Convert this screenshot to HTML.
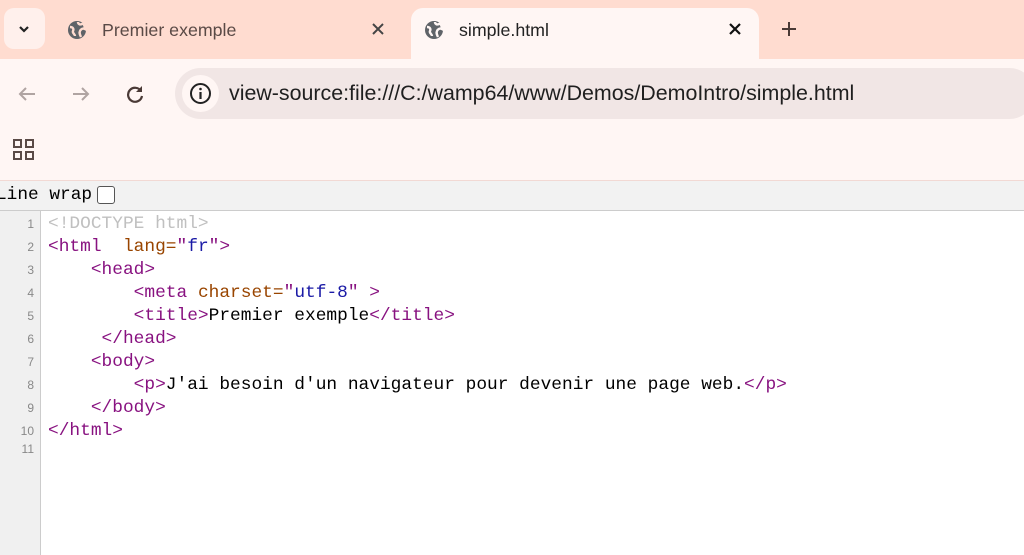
<!DOCTYPE html>
<html><head><style>
body{margin:0;width:1024px;height:555px;overflow:hidden;background:#fff;font-family:"Liberation Sans",sans-serif;position:relative}
.a{position:absolute}
.strip{left:0;top:0;width:1024px;height:60px;background:#ffdcd0}
.tb{left:0;top:59px;width:1024px;height:121px;background:#fff6f4;border-bottom:1px solid #f2d9d4}
.mono{font-family:"Liberation Mono",monospace}
.code{font-size:17.85px;line-height:23px;white-space:pre;left:48px;top:213px;color:#000}
.ln{font-size:12px;color:#888;right:0;width:34px;text-align:right;line-height:23px}
.t{color:#881280}.at{color:#994500}.v{color:#1a1aa6}.c{color:#c0c0c0}
</style></head><body>
<div class="a strip"></div>
<div class="a" style="left:4px;top:8px;width:41px;height:41px;border-radius:10px;background:#fff0ec"></div>
<svg class="a" style="left:16px;top:21px" width="16" height="16"><path d="M4 6l4 4 4-4" stroke="#222" stroke-width="2.2" fill="none"/></svg>
<svg class="a" style="left:67px;top:20px" width="20" height="20" viewBox="0 0 20 20"><circle cx="10" cy="10" r="9" fill="#5f6368"/><path d="M3 7c3 0 4 2 3 4s2 3 2 5M11 2c0 2 2 3 4 2s3 3 3 5c-2-1-4 0-5 2s0 4 1 6" stroke="#ffdcd0" stroke-width="2.4" fill="none"/></svg>
<div class="a" style="left:102px;top:20px;font-size:17.8px;color:#5a4a46">Premier exemple</div>
<svg class="a" style="left:371px;top:22px" width="14" height="14"><path d="M2 2l10 10M12 2L2 12" stroke="#444" stroke-width="2"/></svg>
<div class="a" style="left:411px;top:8px;width:348px;height:55px;background:#fff6f4;border-radius:12px 12px 0 0"></div>
<svg class="a" style="left:424px;top:20px" width="20" height="20" viewBox="0 0 20 20"><circle cx="10" cy="10" r="9" fill="#5f6368"/><path d="M3 7c3 0 4 2 3 4s2 3 2 5M11 2c0 2 2 3 4 2s3 3 3 5c-2-1-4 0-5 2s0 4 1 6" stroke="#fff6f4" stroke-width="2.4" fill="none"/></svg>
<div class="a" style="left:459px;top:20px;font-size:17.8px;color:#222">simple.html</div>
<svg class="a" style="left:728px;top:22px" width="14" height="14"><path d="M2 2l10 10M12 2L2 12" stroke="#111" stroke-width="2.2"/></svg>
<svg class="a" style="left:780px;top:20px" width="18" height="18"><path d="M9 2v14M2 9h14" stroke="#4a3a36" stroke-width="2"/></svg>
<div class="a tb"></div>
<svg class="a" style="left:16px;top:83px" width="22" height="22"><path d="M19 11H4M10 5l-6 6 6 6" stroke="#b0a4a2" stroke-width="2" fill="none"/></svg>
<svg class="a" style="left:70px;top:83px" width="22" height="22"><path d="M3 11h15M12 5l6 6-6 6" stroke="#b0a4a2" stroke-width="2" fill="none"/></svg>
<svg class="a" style="left:124px;top:83px" width="22" height="22"><path d="M17 8A7 7 0 1 0 18 13" stroke="#4a3a36" stroke-width="2.2" fill="none"/><path d="M18 3v6h-6z" fill="#4a3a36"/></svg>
<div class="a" style="left:175px;top:68px;width:860px;height:51px;border-radius:26px;background:#f1e6e5"></div>
<div class="a" style="left:182px;top:75px;width:37px;height:37px;border-radius:50%;background:#fff6f4"></div>
<svg class="a" style="left:189px;top:82px" width="23" height="23" viewBox="0 0 23 23"><circle cx="11.5" cy="11.5" r="9.5" stroke="#222" stroke-width="2" fill="none"/><path d="M11.5 10v7" stroke="#222" stroke-width="2.2"/><circle cx="11.5" cy="7" r="1.3" fill="#222"/></svg>
<div class="a" style="left:229px;top:81px;font-size:21.4px;color:#1f1f1f">view-source:file:///C:/wamp64/www/Demos/DemoIntro/simple.html</div>
<svg class="a" style="left:13px;top:139px" width="22" height="22"><g stroke="#5a4a46" stroke-width="2" fill="none"><rect x="1" y="1" width="7" height="7"/><rect x="13" y="1" width="7" height="7"/><rect x="1" y="13" width="7" height="7"/><rect x="13" y="13" width="7" height="7"/></g></svg>
<div class="a" style="left:0;top:181px;width:1024px;height:29px;background:#f2f2f2;border-bottom:1px solid #ccc"></div>
<div class="a mono" style="left:-4px;top:185px;font-size:17.8px;color:#000">Line wrap</div>
<div class="a" style="left:97px;top:186px;width:16px;height:16px;border:1.5px solid #555;border-radius:3px;background:#fff"></div>
<div class="a" style="left:0;top:211px;width:40px;height:344px;background:#f0f0f0;border-right:1px solid #ccc"></div>
<div class="a" style="left:0;top:213px;width:34px">
<div class="ln">1</div><div class="ln">2</div><div class="ln">3</div><div class="ln">4</div><div class="ln">5</div><div class="ln">6</div><div class="ln">7</div><div class="ln">8</div><div class="ln">9</div><div class="ln">10</div><div class="ln" style="line-height:12px;margin-top:0">11</div>
</div>
<div class="a mono code"><span class="c">&lt;!DOCTYPE html&gt;</span>
<span class="t">&lt;html</span>  <span class="at">lang=</span><span class="t">"</span><span class="v">fr</span><span class="t">"&gt;</span>
    <span class="t">&lt;head&gt;</span>
        <span class="t">&lt;meta</span> <span class="at">charset=</span><span class="t">"</span><span class="v">utf-8</span><span class="t">" &gt;</span>
        <span class="t">&lt;title&gt;</span>Premier exemple<span class="t">&lt;/title&gt;</span>
     <span class="t">&lt;/head&gt;</span>
    <span class="t">&lt;body&gt;</span>
        <span class="t">&lt;p&gt;</span>J'ai besoin d'un navigateur pour devenir une page web.<span class="t">&lt;/p&gt;</span>
    <span class="t">&lt;/body&gt;</span>
<span class="t">&lt;/html&gt;</span>
</div>
</body></html>
